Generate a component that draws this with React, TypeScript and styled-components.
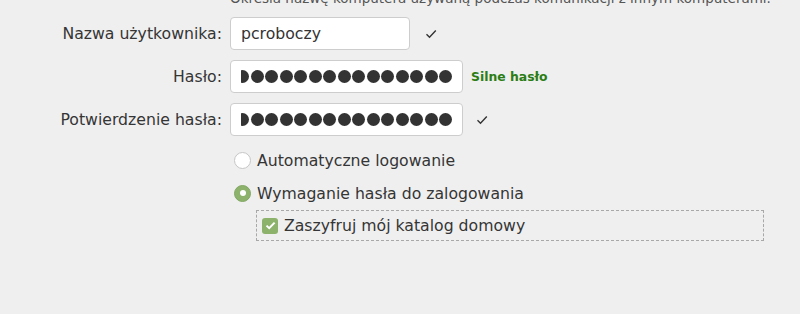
import React from "react";
import styled, { createGlobalStyle } from "styled-components";

const Global = createGlobalStyle`
  html, body {
    margin: 0;
    padding: 0;
    background: #efefef;
  }
  body {
    width: 800px;
    height: 314px;
    overflow: hidden;
    font-family: "DejaVu Sans", "Noto Sans", sans-serif;
    color: #353535;
  }
`;

const Page = styled.div`
  width: 800px;
  height: 314px;
  overflow: hidden;
  background: #efefef;
`;

const Form = styled.div`
  display: grid;
  grid-template-columns: 222px 1fr;
  column-gap: 8px;
  row-gap: 10px;
  align-items: center;
  margin-top: -10px;
`;

const Hint = styled.div`
  grid-column: 2;
  font-size: 13.5px;
  line-height: 17px;
  color: #555;
  white-space: nowrap;
`;

const Label = styled.label`
  justify-self: end;
  font-size: 15.7px;
  color: #353535;
  white-space: nowrap;
`;

const Field = styled.div`
  display: flex;
  align-items: center;
`;

const Input = styled.div<{ $w: number }>`
  box-sizing: border-box;
  width: ${(p) => p.$w}px;
  height: 33px;
  background: #fff;
  border: 1px solid #cdcdcd;
  border-radius: 4px;
  display: flex;
  align-items: center;
  padding: 0 10px;
  font-size: 15.7px;
  color: #333;
  overflow: hidden;
`;

const Dots = styled.div`
  display: flex;
  align-items: center;
  justify-content: flex-end;
  width: 100%;
  overflow: hidden;
  gap: 1.5px;
  margin-right: -1px;
`;

const Dot = styled.span`
  flex: 0 0 13px;
  width: 13px;
  height: 13px;
  border-radius: 50%;
  background: #333;
`;

const Check = styled.svg<{ $ml: number }>`
  margin-left: ${(p) => p.$ml}px;
  width: 12px;
  height: 10px;
`;

const Strength = styled.span`
  margin-left: 8px;
  font-size: 12.4px;
  font-weight: 700;
  color: #2b7d14;
`;

const Options = styled.div`
  display: flex;
  flex-direction: column;
  margin-left: 234px;
  margin-top: 13px;
`;

const RadioRow = styled.div`
  display: flex;
  align-items: center;
  height: 22px;
  gap: 6px;
  margin-bottom: 11px;
  font-size: 15.7px;
  color: #353535;
`;

const Radio = styled.span<{ $on?: boolean }>`
  box-sizing: border-box;
  width: 17px;
  height: 17px;
  border-radius: 50%;
  background: ${(p) => (p.$on ? "#8cb26c" : "#fff")};
  border: 1px solid ${(p) => (p.$on ? "#82a864" : "#c6c6c6")};
  display: flex;
  align-items: center;
  justify-content: center;
  &::after {
    content: "";
    display: ${(p) => (p.$on ? "block" : "none")};
    width: 6px;
    height: 6px;
    border-radius: 50%;
    background: #fff;
  }
`;

const CheckFrame = styled.div`
  box-sizing: border-box;
  margin-left: 22px;
  margin-top: -5px;
  width: 508px;
  height: 31px;
  border: 1px dashed #a8a8a8;
  display: flex;
  align-items: center;
  padding-left: 5px;
  gap: 6px;
  font-size: 15.7px;
  color: #353535;
`;

const CheckBox = styled.span`
  width: 16px;
  height: 16px;
  border-radius: 3px;
  background: #8cb26c;
  display: flex;
  align-items: center;
  justify-content: center;
`;

const Tick = ({ ml }: { ml: number }) => (
  <Check $ml={ml} viewBox="0 0 12 10">
    <path d="M1.5 5.2 L4.5 8.2 L10.8 1.6" fill="none" stroke="#333" strokeWidth="1.4" />
  </Check>
);

const dots = Array.from({ length: 16 });

export default function App() {
  return (
    <Page>
      <Global />
      <Form>
        <Hint>Określa nazwę komputera używaną podczas komunikacji z innym komputerami.</Hint>
        <Label>Nazwa użytkownika:</Label>
        <Field>
          <Input $w={180}>pcroboczy</Input>
          <Tick ml={15} />
        </Field>
        <Label>Hasło:</Label>
        <Field>
          <Input $w={233}>
            <Dots>
              {dots.map((_, i) => (
                <Dot key={i} />
              ))}
            </Dots>
          </Input>
          <Strength>Silne hasło</Strength>
        </Field>
        <Label>Potwierdzenie hasła:</Label>
        <Field>
          <Input $w={233}>
            <Dots>
              {dots.map((_, i) => (
                <Dot key={i} />
              ))}
            </Dots>
          </Input>
          <Tick ml={13} />
        </Field>
      </Form>
      <Options>
        <RadioRow>
          <Radio />
          Automatyczne logowanie
        </RadioRow>
        <RadioRow>
          <Radio $on />
          Wymaganie hasła do zalogowania
        </RadioRow>
        <CheckFrame>
          <CheckBox>
            <svg width="11" height="9" viewBox="0 0 11 9">
              <path d="M1.5 4.6 L4.2 7.2 L9.6 1.6" fill="none" stroke="#fff" strokeWidth="2" />
            </svg>
          </CheckBox>
          Zaszyfruj mój katalog domowy
        </CheckFrame>
      </Options>
    </Page>
  );
}
